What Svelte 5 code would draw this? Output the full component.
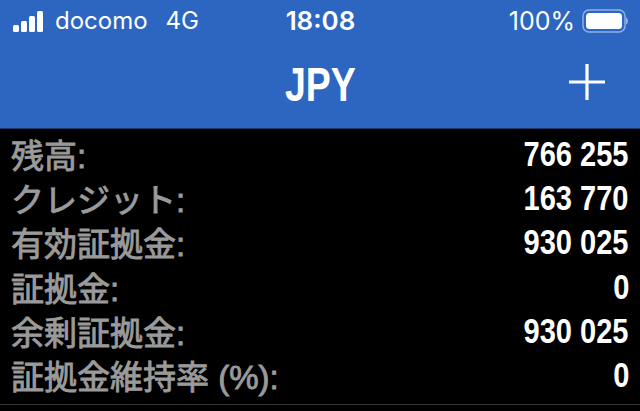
<script lang="ts">
	const rows = [
		{ label: '残高:', value: '766 255' },
		{ label: 'クレジット:', value: '163 770' },
		{ label: '有効証拠金:', value: '930 025' },
		{ label: '証拠金:', value: '0' },
		{ label: '余剰証拠金:', value: '930 025' },
		{ label: '証拠金維持率 (%):', value: '0' },
	];
	const bars = [
		{ x: 0, y: 14, h: 7 },
		{ x: 8, y: 10, h: 11 },
		{ x: 16, y: 5, h: 16 },
		{ x: 24, y: 0, h: 21 },
	];
</script>

<div class="screen">
	<header class="top">
		<div class="status">
			<div class="status-left">
				<svg class="signal" width="33" height="21" viewBox="0 0 33 21" aria-hidden="true">
					{#each bars as b}
						<rect x={b.x} y={b.y} width="6" height={b.h} rx="1.5" fill="#fff" />
					{/each}
				</svg>
				<span class="carrier">docomo</span>
				<span class="network">4G</span>
			</div>
			<div class="time">18:08</div>
			<div class="status-right">
				<span class="pct">100%</span>
				<svg width="46" height="24" viewBox="0 0 46 24" aria-hidden="true">
					<rect x="1" y="1" width="42" height="22" rx="6" fill="none" stroke="#8fb0e4" stroke-width="1.5" />
					<rect x="4" y="4" width="36" height="16" rx="3.5" fill="#fff" />
					<path d="M44 8.500c1.400.5 2 2 2 3.500s-.6 3-2 3.500z" fill="#8fb0e4" />
				</svg>
			</div>
		</div>
		<div class="nav">
			<h1>JPY</h1>
			<svg class="plus" width="36" height="36" viewBox="0 0 36 36" aria-hidden="true">
				<path d="M18 0v36M0 18h36" stroke="#fff" stroke-width="3.2" fill="none" />
			</svg>
		</div>
	</header>
	<main class="list">
		{#each rows as row}
			<div class="row">
				<span class="label">{row.label}</span>
				<span class="value">{row.value}</span>
			</div>
		{/each}
	</main>
	<div class="rule"></div>
</div>

<style>
	:global(body) {
		margin: 0;
		background: #000;
	}

	.screen {
		width: 640px;
		height: 411px;
		overflow: hidden;
		background: #000;
		font-family: "Liberation Sans", Arial, sans-serif;
	}

	.top {
		height: 129px;
		box-sizing: border-box;
		background: #2d66c0;
		color: #fff;
		padding: 8px 12px 0 13px;
		border-bottom: 1px solid #1d3a68;
	}

	.status {
		display: grid;
		grid-template-columns: 1fr auto 1fr;
		align-items: center;
		height: 26px;
		font-family: Inter, "Noto Sans", sans-serif;
		font-size: 24px;
		line-height: 26px;
	}

	.status-left {
		display: flex;
		align-items: center;
	}

	.signal {
		margin-right: 9px;
	}

	.network {
		margin-left: 18px;
	}

	.time {
		font-size: 26px;
		font-weight: 600;
	}

	.status-right {
		display: flex;
		align-items: center;
		justify-content: flex-end;
		gap: 7px;
	}

	.pct {
		font-size: 25px;
	}

	.nav {
		display: flex;
		align-items: center;
		justify-content: center;
		position: relative;
		height: 85px;
		margin-top: 8px;
	}

	h1 {
		margin: 0;
		font-size: 48px;
		font-weight: 700;
		transform: scaleX(0.78);
	}

	.plus {
		position: absolute;
		right: 23px;
		top: 22px;
	}

	.list {
		padding: 6px 11px 0 11px;
	}

	.row {
		display: flex;
		justify-content: space-between;
		align-items: center;
		height: 44.2px;
	}

	.label {
		font-family: "Liberation Sans", "Noto Sans CJK JP", sans-serif;
		font-size: 33px;
		font-weight: 400;
		-webkit-text-stroke: 0.9px #9a9a9a;
		color: #9a9a9a;
		line-height: 44px;
	}

	.value {
		font-size: 35px;
		font-weight: 700;
		color: #fff;
		line-height: 44px;
		margin-bottom: 6px;
		transform: scaleX(0.83);
		transform-origin: right center;
	}

	.rule {
		height: 1px;
		margin-top: 4px;
		background: #333;
	}
</style>
